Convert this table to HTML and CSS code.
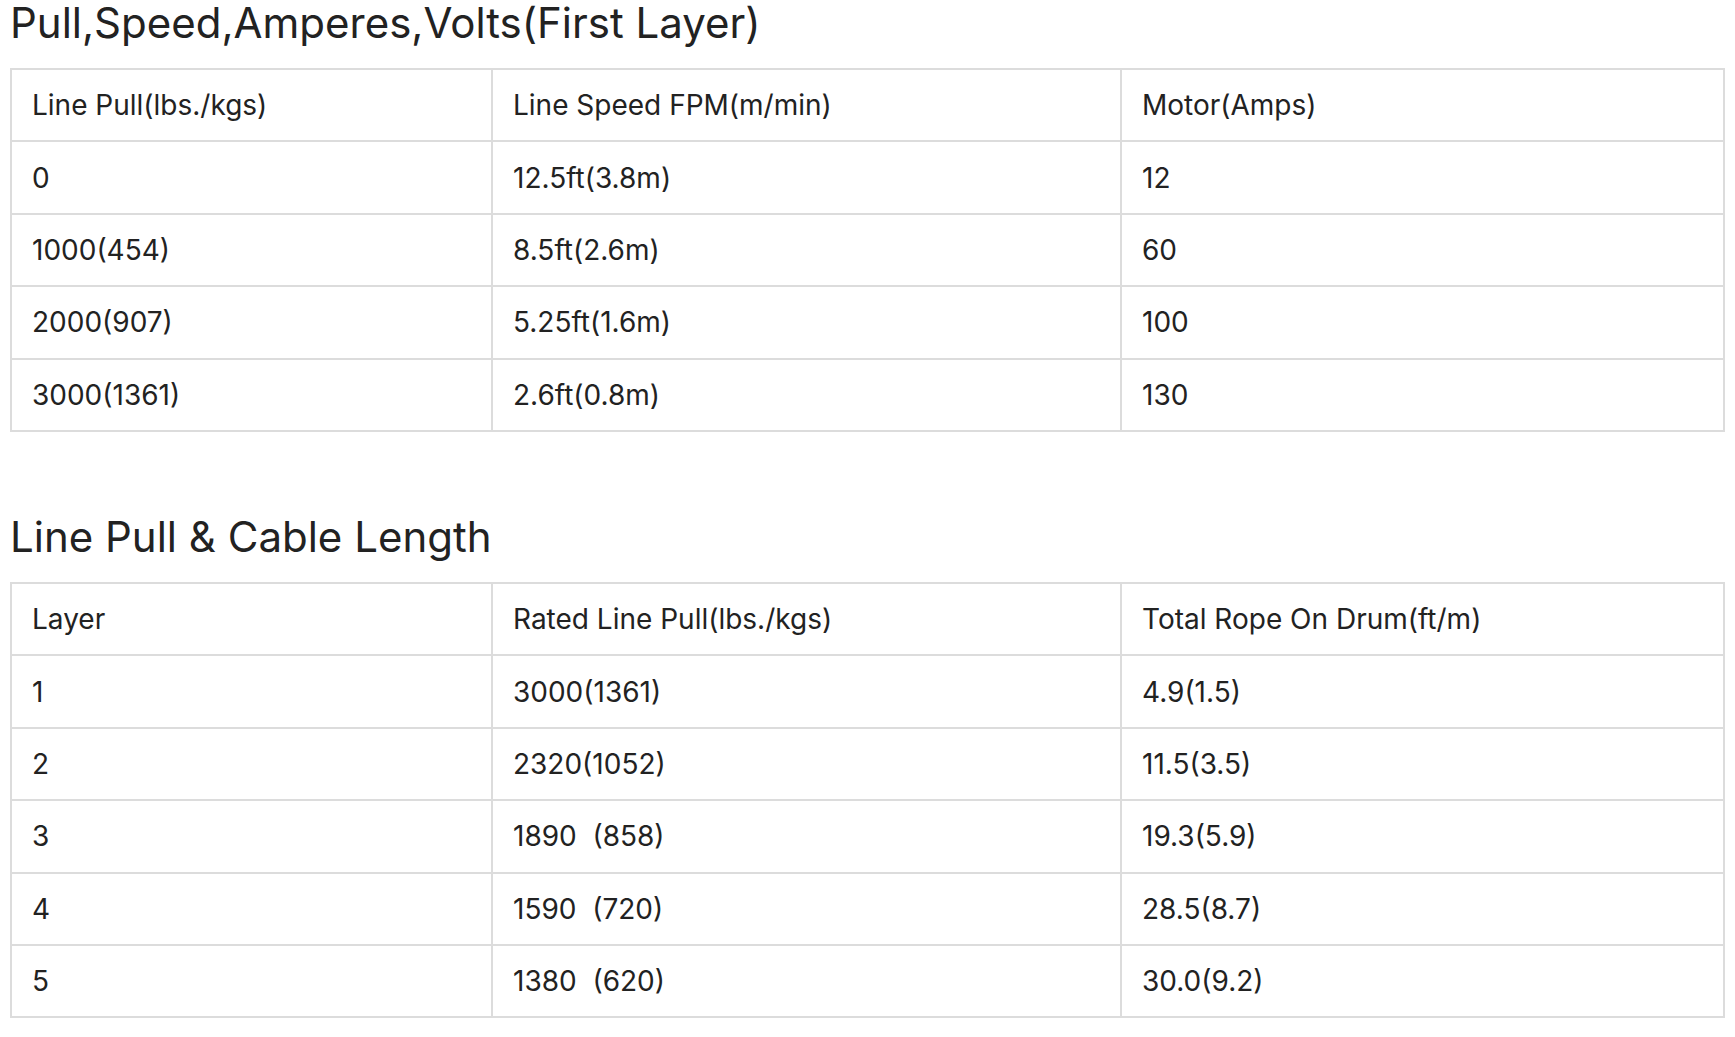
FILE: index.html
```html
<!DOCTYPE html>
<html>
<head>
<meta charset="utf-8">
<link rel="stylesheet" href="styles.css">
</head>
<body>
<section class="spec">
  <h2 class="spec-title">Pull,Speed,Amperes,Volts(First Layer)</h2>
  <table class="spec-table">
    <colgroup><col class="c1"><col class="c2"><col class="c3"></colgroup>
    <tr><td>Line Pull(lbs./kgs)</td><td>Line Speed FPM(m/min)</td><td>Motor(Amps)</td></tr>
    <tr><td>0</td><td>12.5ft(3.8m)</td><td>12</td></tr>
    <tr><td>1000(454)</td><td>8.5ft(2.6m)</td><td>60</td></tr>
    <tr><td>2000(907)</td><td>5.25ft(1.6m)</td><td>100</td></tr>
    <tr><td>3000(1361)</td><td>2.6ft(0.8m)</td><td>130</td></tr>
  </table>
</section>
<section class="spec">
  <h2 class="spec-title">Line Pull &amp; Cable Length</h2>
  <table class="spec-table">
    <colgroup><col class="c1"><col class="c2"><col class="c3"></colgroup>
    <tr><td>Layer</td><td>Rated Line Pull(lbs./kgs)</td><td>Total Rope On Drum(ft/m)</td></tr>
    <tr><td>1</td><td>3000(1361)</td><td>4.9(1.5)</td></tr>
    <tr><td>2</td><td>2320(1052)</td><td>11.5(3.5)</td></tr>
    <tr><td>3</td><td>1890&nbsp;&nbsp;(858)</td><td>19.3(5.9)</td></tr>
    <tr><td>4</td><td>1590&nbsp;&nbsp;(720)</td><td>28.5(8.7)</td></tr>
    <tr><td>5</td><td>1380&nbsp;&nbsp;(620)</td><td>30.0(9.2)</td></tr>
  </table>
</section>
</body>
</html>
```
FILE: styles.css
```css
html, body {
  margin: 0;
  padding: 0;
  background: #fff;
}
body {
  padding: 0 10px;
  font-family: Inter, "Noto Sans", sans-serif;
  color: #222;
}
.spec {
  margin-bottom: 82px;
}
.spec:last-child {
  margin-bottom: 0;
}
.spec-title {
  margin: 0 0 22px 0;
  font-size: 42px;
  line-height: 46px;
  font-weight: 400;
  color: #222;
}
.spec-table {
  width: 100%;
  border-collapse: collapse;
  table-layout: fixed;
  border: 2px solid #dcdcdc;
}
.spec-table col.c1 { width: 481px; }
.spec-table col.c2 { width: 629px; }
.spec-table td {
  border: 2px solid #dcdcdc;
  height: 72.4px;
  padding: 0 20px;
  font-size: 28px;
  line-height: 34px;
  vertical-align: middle;
  box-sizing: border-box;
  white-space: pre;
}
```
